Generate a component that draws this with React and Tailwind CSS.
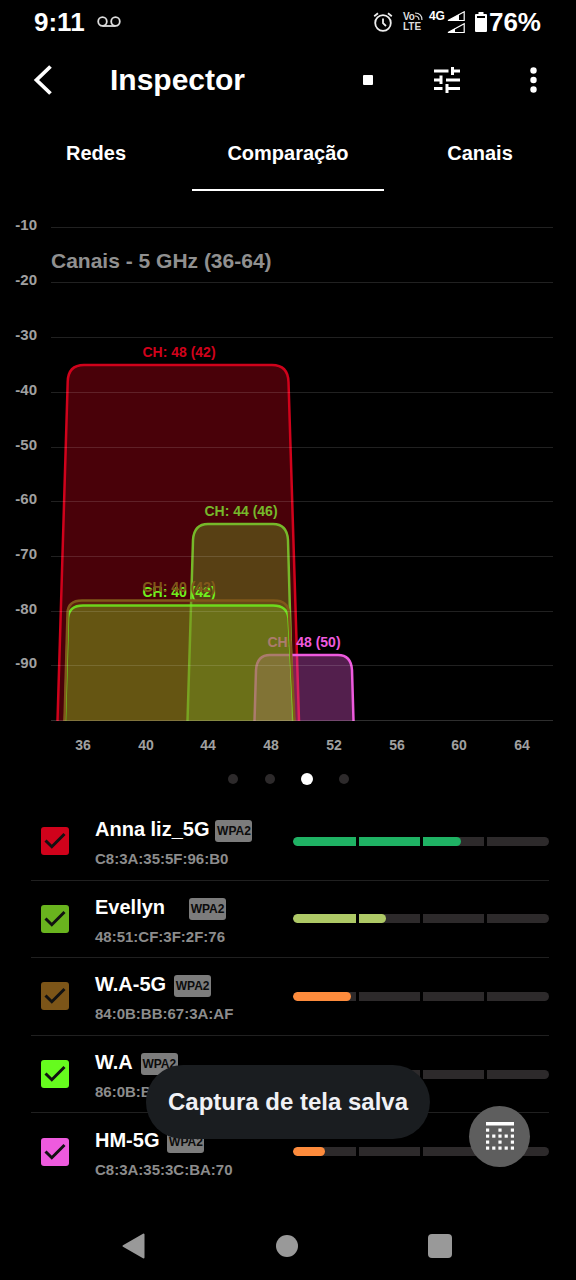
import React from "react";

const networks = [
  { name: "Anna liz_5G", mac: "C8:3A:35:5F:96:B0", color: "bg-[#d0021b]", bar: "bg-[#1fb264]", level: 65.5, gap: "gap-1.5" },
  { name: "Evellyn", mac: "48:51:CF:3F:2F:76", color: "bg-[#69b41e]", bar: "bg-[#aec966]", level: 36.5, gap: "gap-6" },
  { name: "W.A-5G", mac: "84:0B:BB:67:3A:AF", color: "bg-[#7c5518]", bar: "bg-[#fd8b3c]", level: 22.5, gap: "gap-2" },
  { name: "W.A", mac: "86:0B:BB:67:3A:AF", color: "bg-[#66fb1e]", bar: "bg-[#fd8b3c]", level: 21, gap: "gap-2" },
  { name: "HM-5G", mac: "C8:3A:35:3C:BA:70", color: "bg-[#ee5ade]", bar: "bg-[#fd8b3c]", level: 12.5, gap: "gap-2" },
];

const gridLines = [
  ["-10", 228], ["-20", 283], ["-30", 338], ["-40", 393], ["-50", 448],
  ["-60", 502], ["-70", 557], ["-80", 612], ["-90", 666],
];

const channels = [
  ["36", 83], ["40", 146], ["44", 208], ["48", 271], ["52", 334], ["56", 397], ["60", 459], ["64", 522],
];

const brownShape = "M64.5 721L67.5 613Q68 600.5 82 600.5H274Q288 600.5 289 613L294.5 721";
const limeShape = "M65 721L68 618Q69 605.5 83 605.5H273Q287 605.5 288.5 618L294 721";

const signals = [
  { label: "CH: 48 (42)", x: 179, y: 357, color: "#d0021b", fill: 0.35, line: 1, d: "M57.5 721L67.7 382Q68 365 84 365H272Q288 365 288.5 382L299 721" },
  { label: "CH: 44 (46)", x: 241, y: 516, color: "#76b82a", fill: 0.35, line: 1, d: "M187.5 721L193 540Q194 524 208 524H273Q287 524 288 540L293 721" },
  { label: "CH: 48 (50)", x: 304, y: 647, color: "#ee5ade", fill: 0.35, line: 1, d: "M254.5 721L256 670Q257 655 270 655H338Q351 655 352 670L353.5 721" },
  { color: "#70f01e", fill: 0.35, line: 0, d: limeShape },
  { color: "#80581a", fill: 0.35, line: 0, d: brownShape },
  { label: "CH: 40 (42)", x: 179, y: 597, color: "#70f01e", fill: 0, line: 0.85, d: limeShape },
  { label: "CH: 40 (42)", x: 179, y: 592, color: "#80581a", fill: 0, line: 1, d: brownShape },
];

function StatusBar() {
  return (
    <div className="flex h-[43px] items-center justify-between pl-[34px] pr-[35px]">
      <div className="flex items-center gap-3">
        <span className="text-[26px] leading-7">9:11</span>
        <svg className="h-3 w-6" viewBox="0 0 24 12" fill="none" stroke="#ddd" strokeWidth="1.8">
          <circle cx="5.5" cy="5.5" r="4.3" />
          <circle cx="18.5" cy="5.5" r="4.3" />
          <path d="M5.5 10H18.5" />
        </svg>
      </div>
      <div className="flex items-center">
        <svg className="h-5 w-5" viewBox="0 0 20 20" fill="none" stroke="#eee" strokeWidth="1.8">
          <circle cx="10" cy="11" r="7.8" />
          <path d="M10 6.5V11.2L13 14M1.2 4.2L5 1.2M18.8 4.2L15 1.2" />
        </svg>
        <div className="ml-2.5 flex w-5 flex-col text-[10px] leading-[10px] text-[#ddd]">
          <span className="flex">
            Vo
            <svg className="h-2 w-2" viewBox="0 0 8 8" fill="none" stroke="#ddd" strokeWidth="1.2">
              <path d="M0 1Q7 1 7 8M0 4Q4 4 4 8" />
            </svg>
          </span>
          <span>LTE</span>
        </div>
        <span className="ml-1.5 mt-0.5 self-start text-xs leading-3">4G</span>
        <svg className="ml-0.5 h-[22px] w-[18px]" viewBox="0 0 18 22" fill="none" stroke="#fff" strokeWidth="1.2">
          <path d="M1 9.5L17.2.8V9.5ZM1 21.5L17.2 12.8V21.5Z" />
          <path d="M1 9.5L12 3.5V9.5ZM1 21.5L8 17.5V21.5Z" fill="#fff" stroke="none" />
        </svg>
        <svg className="ml-[10px] h-5 w-3" viewBox="0 0 12 20" fill="#fff">
          <path d="M3.5 0h5v2H11a1 1 0 0 1 1 1V19a1 1 0 0 1-1 1H1a1 1 0 0 1-1-1V3a1 1 0 0 1 1-1H3.5Z" />
          <path d="M2 4H10V6H2Z" fill="#000" />
        </svg>
        <span className="ml-0.5 text-[26px] leading-7">76%</span>
      </div>
    </div>
  );
}

function Header() {
  return (
    <header className="flex h-[74px] items-center pl-8 pr-6">
      <button aria-label="Voltar" className="flex w-[78px] items-center">
        <svg className="h-[30px] w-6" viewBox="0 0 24 30" fill="none" stroke="#fff" strokeWidth="3.8">
          <path d="M18.5 1.5L4.5 15L18.5 28.5" />
        </svg>
      </button>
      <h1 className="flex-1 text-[30px] leading-9">Inspector</h1>
      <button aria-label="Parar" className="mr-[56px] p-1">
        <span className="block size-[10px] rounded-[1px] bg-white" />
      </button>
      <button aria-label="Filtros" className="mr-[53px]">
        <svg className="h-7 w-7" viewBox="0 0 28 28" fill="none" stroke="#fff" strokeWidth="3">
          <path d="M1 5H15.5M20 5H27M19.5 1V9M1 14H8M13 14H27M8 9.5V18M1 22.5H9.5M14 22.5H27M14 18V27" />
        </svg>
      </button>
      <button aria-label="Mais opções" className="flex w-[38px] justify-center">
        <svg className="h-[26px] w-[7px]" viewBox="0 0 7 26" fill="#fff">
          <circle cx="3.5" cy="3.5" r="3.2" />
          <circle cx="3.5" cy="13" r="3.2" />
          <circle cx="3.5" cy="22.5" r="3.2" />
        </svg>
      </button>
    </header>
  );
}

function Tabs() {
  return (
    <nav className="grid h-[74px] grid-cols-3 text-[20px] leading-6">
      <button className="border-b-2 border-transparent">Redes</button>
      <button className="border-b-2 border-white" aria-current="page">Comparação</button>
      <button className="border-b-2 border-transparent">Canais</button>
    </nav>
  );
}

function Chart() {
  return (
    <svg className="block w-full" viewBox="0 191 576 569" fontWeight="700">
      <text x="51" y="268" fontSize="21" fill="#909090">Canais - 5 GHz (36-64)</text>
      {signals.map((s, i) => (
        <g key={i}>
          {s.label && <text x={s.x} y={s.y} fontSize="14" textAnchor="middle" fill={s.color}>{s.label}</text>}
          <path d={s.d} fill={s.color} fillOpacity={s.fill} stroke={s.color} strokeOpacity={s.line} strokeWidth="2.5" />
        </g>
      ))}
      {gridLines.map(([label, y]) => (
        <g key={label}>
          <text x="37" y={y + 2} fontSize="15" textAnchor="end" fill="#a0a0a0">{label}</text>
          <path d={`M51 ${y - 0.5}H553`} stroke="#fff" strokeOpacity="0.13" />
        </g>
      ))}
      <path d="M51 720.5H553" stroke="#fff" strokeOpacity="0.18" />
      {channels.map(([label, x]) => (
        <text key={label} x={x} y="750" fontSize="14" textAnchor="middle" fill="#a0a0a0">{label}</text>
      ))}
    </svg>
  );
}

function SignalBar({ level, bar }) {
  return (
    <div className="relative h-[9px] w-64 overflow-hidden rounded-full bg-[#2d2a2b]">
      <div className={`h-full rounded-full ${bar}`} style={{ width: `${level}%` }} />
      <div className="absolute inset-y-0 left-0.5 -right-0.5 grid grid-cols-4">
        <span className="border-r-[3px] border-black" />
        <span className="border-r-[3px] border-black" />
        <span className="border-r-[3px] border-black" />
        <span />
      </div>
    </div>
  );
}

function NetworkRow({ network }) {
  const { name, mac, color, bar, level, gap } = network;
  return (
    <li className="flex items-center border-b border-[#202020] pl-[10px] last:border-transparent">
      <label className="flex flex-1 items-center">
        <span className="relative mr-[26px] size-7">
          <input type="checkbox" defaultChecked className={`block size-7 appearance-none rounded-[3px] ${color}`} />
          <svg className="pointer-events-none absolute inset-0 size-7" viewBox="0 0 28 28" fill="none" stroke="#111" strokeWidth="3">
            <path d="M4.5 13.5L10.8 19.7L23.5 7" />
          </svg>
        </span>
        <span className="flex flex-col gap-1.5 pt-0.5">
          <span className={`flex items-center ${gap}`}>
            <span className="text-xl leading-7">{name}</span>
            <span className="mt-1 flex h-[22px] w-[37px] items-center justify-center rounded-[3px] bg-[#7c7c7c] text-xs text-[#0c0c0c]">WPA2</span>
          </span>
          <span className="text-[15px] leading-5 text-[#8c8c8c]">{mac}</span>
        </span>
      </label>
      <SignalBar level={level} bar={bar} />
    </li>
  );
}

const dots = [];
for (const y of [6.5, 12.5, 18.5, 24.5]) {
  for (let c = 0; c < 5; c++) {
    const full = y === 12.5 || y === 24.5;
    if (full || c % 2 === 0) dots.push([c * 6.2, y]);
  }
}

export default function App() {
  return (
    <div className="relative flex min-h-screen flex-col bg-black font-['Liberation_Sans',Arial,sans-serif] font-bold text-white">
      <StatusBar />
      <Header />
      <Tabs />
      <Chart />
      <div className="flex h-[37px] items-center justify-center gap-[27px]">
        <span className="size-[10px] rounded-full bg-[#2d2a2b]" />
        <span className="size-[10px] rounded-full bg-[#2d2a2b]" />
        <span className="size-[10px] rounded-full bg-white ring-1 ring-white" />
        <span className="size-[10px] rounded-full bg-[#2d2a2b]" />
      </div>
      <ul className="mt-1.5 grid h-[388px] auto-rows-fr pl-[31px] pr-[27px]">
        {networks.map((n) => (
          <NetworkRow key={n.mac} network={n} />
        ))}
      </ul>
      <div className="mt-auto flex h-[68px] items-center justify-between pl-[122px] pr-[124px]">
        <button aria-label="Retroceder">
          <svg className="h-[26px] w-[23px]" viewBox="0 0 23 26" fill="#999" stroke="#999" strokeWidth="2" strokeLinejoin="round">
            <path d="M1.5 13L21.5 1.5V24.5Z" />
          </svg>
        </button>
        <button aria-label="Início"><span className="block size-[22px] rounded-full bg-[#999]" /></button>
        <button aria-label="Recentes"><span className="block size-6 rounded-sm bg-[#999]" /></button>
      </div>
      <div role="status" className="absolute bottom-[141px] left-1/2 flex h-[74px] -translate-x-1/2 items-center whitespace-nowrap rounded-full bg-[#1a1d20] px-[22px] text-2xl text-[#f0f1f5]">
        Captura de tela salva
      </div>
      <button aria-label="Canais" className="absolute bottom-[113px] right-[46px] flex size-[61px] items-center justify-center rounded-full bg-[#5e5e5e]">
        <svg className="h-[29px] w-7" viewBox="0 0 28 29" fill="#fff">
          <path d="M0 0H28V3.5H0Z" />
          {dots.map(([x, y]) => <rect key={`${x}-${y}`} x={x} y={y} width="3.2" height="3.2" />)}
        </svg>
      </button>
    </div>
  );
}
